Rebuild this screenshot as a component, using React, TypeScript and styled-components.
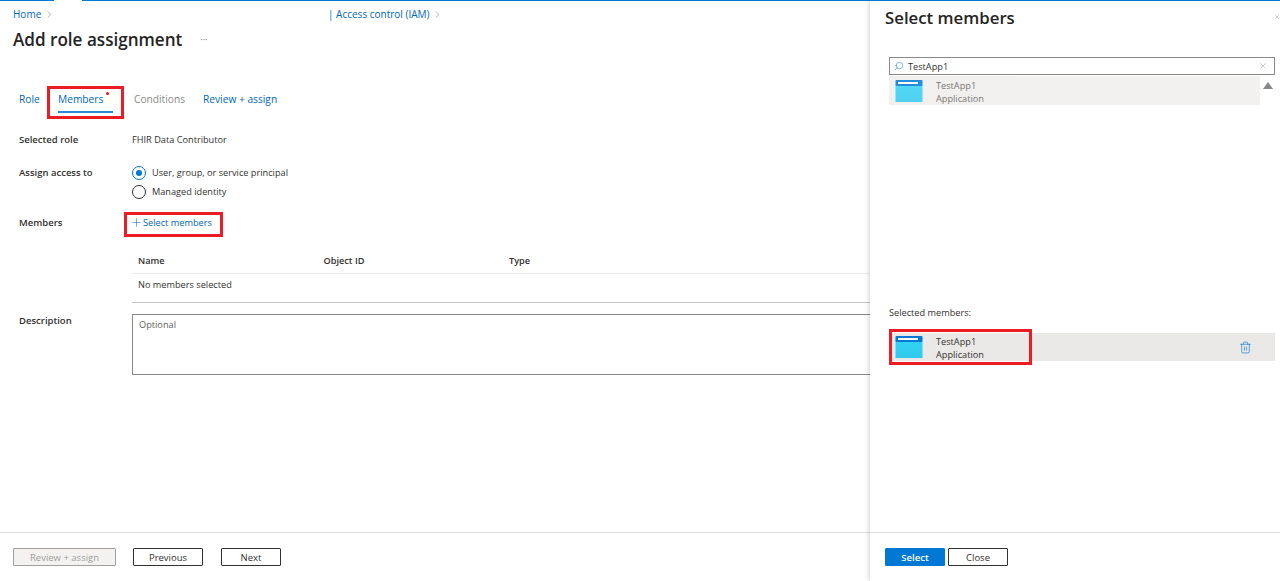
import React from 'react';
import styled, { createGlobalStyle } from 'styled-components';
import { ChevronRight, Plus, Search, Trash2, X } from 'lucide-react';

const GlobalStyle = createGlobalStyle`
  html, body {
    margin: 0;
    height: 100%;
    background: #fff;
    overflow: hidden;
  }
  body {
    font-family: "Open Sans", "Noto Sans", "Liberation Sans", sans-serif;
    font-size: 9.2px;
    color: #323130;
  }
  * {
    box-sizing: border-box;
  }
`;

const AppIcon = ({ id }: { id: string }) => (
  <svg width='28' height='22' viewBox='0 0 28 22'>
    <defs>
      <linearGradient id={id} x1='0' y1='0' x2='0' y2='1'>
        <stop offset='0' stopColor='#32d4f5' />
        <stop offset='1' stopColor='#32c8ee' />
      </linearGradient>
    </defs>
    <rect x='0.5' y='5' width='27' height='17' fill={`url(#${id})`} />
    <rect x='0.5' y='0' width='27' height='6' rx='1' fill='#0078d4' />
    <rect x='3' y='2' width='20' height='2' fill='#fff' />
  </svg>
);

const App = () => {
  return (
    <>
      <GlobalStyle />
      <Page>
        <Main>
          <TopLine>
            <LineSegment $width='54px' />
            <LineGap />
            <LineSegment />
          </TopLine>
          <Breadcrumb>
            <Crumb $width='315px'>
              Home <ChevronRight size={11} strokeWidth={1} color='#605e5c' />
            </Crumb>
            <Crumb>
              | Access control (IAM) <ChevronRight size={11} strokeWidth={1} color='#605e5c' />
            </Crumb>
          </Breadcrumb>
          <TitleRow>
            <Title>Add role assignment</Title>
            <More>···</More>
          </TitleRow>
          <Tabs>
            <Tab $width='28px'>Role</Tab>
            <ActiveTab>
              <ActiveLabel>
                Members
                <Dot />
              </ActiveLabel>
            </ActiveTab>
            <Tab $muted $width='69px' $inset='10px'>Conditions</Tab>
            <Tab>Review + assign</Tab>
          </Tabs>
          <Form>
            <FormRow $height='20px'>
              <Label>Selected role</Label>
              <span>FHIR Data Contributor</span>
            </FormRow>
            <FormRow $height='38px' $gap='13px'>
              <Label>Assign access to</Label>
              <RadioGroup>
                <RadioRow>
                  <Radio $checked />
                  User, group, or service principal
                </RadioRow>
                <RadioRow>
                  <Radio />
                  Managed identity
                </RadioRow>
              </RadioGroup>
            </FormRow>
            <MembersRow>
              <MembersLabel>Members</MembersLabel>
              <SelectLink>
                <Plus size={13} strokeWidth={1} />
                Select members
              </SelectLink>
            </MembersRow>
            <TableBlock>
              <TableHead>
                <HeadCell>Name</HeadCell>
                <HeadCell>Object ID</HeadCell>
                <HeadCell>Type</HeadCell>
              </TableHead>
              <TableEmpty>No members selected</TableEmpty>
            </TableBlock>
            <DescriptionRow>
              <DescriptionLabel>Description</DescriptionLabel>
              <DescriptionBox>Optional</DescriptionBox>
            </DescriptionRow>
          </Form>
          <Footer>
            <DisabledButton>Review + assign</DisabledButton>
            <OutlineButton $width='70px'>Previous</OutlineButton>
            <OutlineButton $width='60px'>Next</OutlineButton>
          </Footer>
        </Main>
        <Panel>
          <TopLine>
            <LineSegment />
          </TopLine>
          <PanelHeader>
            <PanelTitle>Select members</PanelTitle>
            <CloseIcon>
              <X size={14} strokeWidth={1} color='#323130' />
            </CloseIcon>
          </PanelHeader>
          <SearchBox>
            <SearchGlyph>
              <Search size={10} strokeWidth={1.2} color='#0078d4' />
            </SearchGlyph>
            <SearchText>TestApp1</SearchText>
            <X size={10} strokeWidth={1} color='#8a8886' />
          </SearchBox>
          <ResultRow>
            <ResultItem>
              <AppIcon id='result-icon' />
              <MemberText>
                <span>TestApp1</span>
                <span>Application</span>
              </MemberText>
            </ResultItem>
            <ScrollArrow />
          </ResultRow>
          <SelectedHeading>Selected members:</SelectedHeading>
          <SelectedRow>
            <Highlight />
            <AppIcon id='selected-icon' />
            <MemberText $dark>
              <span>TestApp1</span>
              <span>Application</span>
            </MemberText>
            <TrashButton>
              <Trash2 size={13} strokeWidth={1.2} color='#0078d4' />
            </TrashButton>
          </SelectedRow>
          <PanelFooter>
            <PrimaryButton>Select</PrimaryButton>
            <OutlineButton $width='60px'>Close</OutlineButton>
          </PanelFooter>
        </Panel>
      </Page>
    </>
  );
};

export default App;

const Page = styled.div`
  display: flex;
  width: 1280px;
  height: 581px;
  overflow: hidden;
`;

const Main = styled.div`
  display: flex;
  flex-direction: column;
  width: 870px;
  flex-shrink: 0;
  overflow: hidden;
`;

const TopLine = styled.div`
  display: flex;
  height: 1px;
  flex-shrink: 0;
`;

const LineSegment = styled.div<{ $width?: string }>`
  background: #0078d4;
  flex: ${(p) => (p.$width ? `0 0 ${p.$width}` : '1')};
`;

const LineGap = styled.div`
  flex: 0 0 28px;
`;

const Breadcrumb = styled.div`
  display: flex;
  align-items: center;
  height: 14px;
  margin-top: 6px;
  padding-left: 13px;
  color: #0067b8;
  font-size: 10px;
`;

const Crumb = styled.div<{ $width?: string }>`
  display: flex;
  align-items: center;
  gap: 3px;
  width: ${(p) => p.$width ?? 'auto'};
`;

const TitleRow = styled.div`
  display: flex;
  align-items: center;
  height: 26px;
  margin-top: 5px;
  padding-left: 13px;
`;

const Title = styled.h1`
  margin: 0;
  font-size: 17.1px;
  font-weight: 600;
  color: #252423;
`;

const More = styled.span`
  margin-left: 18px;
  font-size: 9px;
  color: #605e5c;
`;

const Tabs = styled.div`
  display: flex;
  align-items: flex-start;
  height: 33px;
  margin-top: 34px;
  padding-left: 19px;
  font-size: 10.2px;
  line-height: 27px;
`;

const Tab = styled.div<{ $muted?: boolean; $width?: string; $inset?: string }>`
  width: ${(p) => p.$width ?? 'auto'};
  margin-left: ${(p) => p.$inset ?? '0'};
  color: ${(p) => (p.$muted ? '#8a8886' : '#0067b8')};
`;

const ActiveTab = styled.div`
  width: 77px;
  height: 33px;
  padding: 0 8px;
  border: 3px solid #ed1c24;
`;

const ActiveLabel = styled.div`
  position: relative;
  height: 24px;
  line-height: 21px;
  color: #0067b8;
  border-bottom: 2px solid #2b88d8;
`;

const Dot = styled.span`
  position: absolute;
  left: 48px;
  top: 3px;
  width: 3px;
  height: 3px;
  border-radius: 50%;
  background: #e81123;
`;

const Form = styled.div`
  display: flex;
  flex-direction: column;
  padding-left: 19px;
  margin-top: 11px;
`;

const FormRow = styled.div<{ $height: string; $gap?: string }>`
  display: flex;
  align-items: flex-start;
  height: ${(p) => p.$height};
  margin-bottom: ${(p) => p.$gap ?? '13px'};
  line-height: 20px;
`;

const Label = styled.div`
  width: 113px;
  flex-shrink: 0;
  font-size: 9.5px;
  font-weight: 600;
  color: #323130;
`;

const RadioGroup = styled.div`
  display: flex;
  flex-direction: column;
  gap: 5px;
  padding-top: 3px;
`;

const RadioRow = styled.div`
  display: flex;
  align-items: center;
  gap: 6px;
  height: 14px;
`;

const Radio = styled.span<{ $checked?: boolean }>`
  display: flex;
  align-items: center;
  justify-content: center;
  width: 14px;
  height: 14px;
  border-radius: 50%;
  border: 1px solid ${(p) => (p.$checked ? '#0078d4' : '#323130')};

  &::after {
    content: '';
    width: 6px;
    height: 6px;
    border-radius: 50%;
    background: ${(p) => (p.$checked ? '#0078d4' : 'transparent')};
  }
`;

const MembersRow = styled.div`
  display: flex;
  align-items: center;
  height: 25px;
  margin-top: -2px;
`;

const MembersLabel = styled(Label)`
  width: 105px;
  padding-bottom: 5px;
`;

const SelectLink = styled.div`
  display: flex;
  align-items: center;
  width: 99px;
  height: 25px;
  padding: 0 0 5px 3px;
  border: 3px solid #ed1c24;
  color: #0067b8;
`;

const TableBlock = styled.div`
  margin: 12px 0 0 113px;
  width: 738px;
  border-bottom: 1px solid #c8c6c4;
`;

const TableHead = styled.div`
  display: grid;
  grid-template-columns: 185.5px 185.5px 1fr;
  align-items: center;
  height: 25px;
  padding: 0 0 2px 6px;
  border-bottom: 1px solid #edebe9;
`;

const HeadCell = styled.div`
  font-weight: 600;
`;

const TableEmpty = styled.div`
  display: flex;
  align-items: center;
  height: 28px;
  padding: 0 6px 7px;
`;

const DescriptionRow = styled.div`
  display: flex;
  margin-top: 11px;
`;

const DescriptionLabel = styled(Label)`
  line-height: 14px;
`;

const DescriptionBox = styled.div`
  width: 760px;
  height: 61px;
  flex-shrink: 0;
  padding: 3px 6px;
  border: 1px solid #8a8886;
  color: #605e5c;
`;

const Footer = styled.div`
  display: flex;
  align-items: center;
  margin-top: auto;
  height: 49px;
  padding: 0 0 0 13px;
  border-top: 1px solid #e1dfdd;
`;

const BaseButton = styled.button`
  height: 18px;
  padding: 0;
  font-family: inherit;
  font-size: 9.5px;
  border-radius: 1px;
  background: #fff;
`;

const DisabledButton = styled(BaseButton)`
  width: 103px;
  margin-right: 17px;
  color: #a19f9d;
  background: #f3f2f1;
  border: 1px solid #a19f9d;
`;

const OutlineButton = styled(BaseButton)<{ $width: string }>`
  width: ${(p) => p.$width};
  margin-right: 18px;
  color: #323130;
  border: 1px solid #323130;
`;

const PrimaryButton = styled(BaseButton)`
  width: 60px;
  margin-right: 3px;
  color: #fff;
  font-weight: 600;
  background: #0078d4;
  border: 1px solid #0078d4;
`;

const Panel = styled.div`
  position: relative;
  display: flex;
  flex-direction: column;
  width: 410px;
  flex-shrink: 0;
  background: #fff;
  box-shadow: -1px 0 5px rgba(0, 0, 0, 0.18);
`;

const PanelHeader = styled.div`
  display: flex;
  align-items: center;
  justify-content: space-between;
  height: 24px;
  margin-top: 4px;
  padding-left: 15px;
`;

const PanelTitle = styled.h2`
  margin: 0;
  font-size: 16.8px;
  font-weight: 600;
  color: #252423;
`;

const CloseIcon = styled.div`
  display: flex;
  width: 6px;
  overflow: hidden;
`;

const SearchBox = styled.div`
  display: flex;
  align-items: center;
  width: 386px;
  height: 18px;
  margin: 28px 0 0 19px;
  padding: 0 6px 0 4px;
  border: 1px solid #8a8886;
`;

const SearchGlyph = styled.span`
  display: flex;
  transform: scaleX(-1);
`;

const SearchText = styled.span`
  flex: 1;
  margin-left: 4px;
  color: #323130;
`;

const ResultRow = styled.div`
  display: flex;
  margin: 1px 0 0 19px;
`;

const ResultItem = styled.div`
  display: flex;
  align-items: center;
  width: 371px;
  height: 29px;
  padding-left: 6px;
  background: #f0eeec;
  opacity: 0.85;
`;

const MemberText = styled.div<{ $dark?: boolean }>`
  display: flex;
  flex-direction: column;
  margin: 2px 0 0 13px;
  line-height: 13px;
  color: ${(p) => (p.$dark ? '#323130' : '#605e5c')};
`;

const ScrollArrow = styled.span`
  width: 0;
  height: 0;
  margin: 6px 0 0 3px;
  border-left: 5px solid transparent;
  border-right: 5px solid transparent;
  border-bottom: 7px solid #8a8886;
`;

const SelectedHeading = styled.div`
  margin: 201px 0 0 19px;
  line-height: 14px;
`;

const SelectedRow = styled.div`
  position: relative;
  display: flex;
  align-items: center;
  width: 386px;
  height: 28px;
  margin: 13px 0 0 19px;
  padding-left: 6px;
  background: #ebe9e7;
`;

const Highlight = styled.div`
  position: absolute;
  left: 0;
  top: -4px;
  width: 143px;
  height: 36px;
  border: 3px solid #ed1c24;
`;

const TrashButton = styled.div`
  display: flex;
  margin-left: auto;
  margin-right: 23px;
`;

const PanelFooter = styled.div`
  display: flex;
  align-items: center;
  margin-top: auto;
  height: 49px;
  padding-left: 15px;
  border-top: 1px solid #e1dfdd;
`;
